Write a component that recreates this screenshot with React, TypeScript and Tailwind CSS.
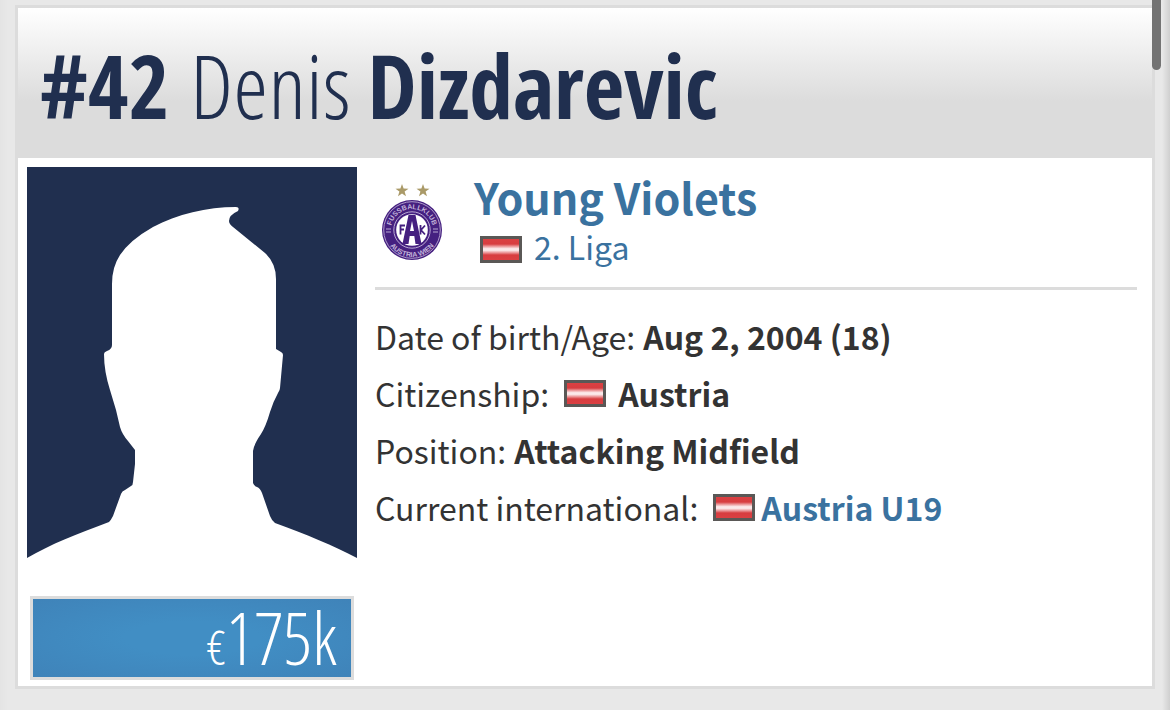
function AustrianFlag({ className = "" }: { className?: string }) {
  return (
    <span
      role="img"
      aria-label="Austria"
      className={`inline-block h-[27px] w-[42px] shrink-0 border-3 border-[#5a5856] bg-[linear-gradient(to_bottom,#db4042_0%,#d73d40_24%,#ea8f91_34%,#fbe9ea_46%,#fbe9ea_54%,#ea8f91_66%,#d73d40_76%,#db4042_100%)] ${className}`}
    />
  );
}

function Silhouette() {
  return (
    <svg viewBox="0 0 330 392" className="block w-full" role="img" aria-label="Denis Dizdarevic">
      <rect width="330" height="392" fill="#202f4f" />
      <path
        fill="#fff"
        d="M0 392V391C24 377 50 367 82 355Q84 353 86 349L94 327Q95 324 98 323L104 319Q106 318 106 315L108 297V283L101 274Q95 267 93 260L89 243L83 223Q77 204 77 187Q77 185 80 184Q85 182 85 178V117Q85 100 93 88Q103 73 126 60C150 47 180 40 209 40Q213 40 211 44Q202 48 202 54Q202 57 206 60L238 86Q249 96 249 112V182L254 185Q256 186 256 188L253 221Q253 223 251 226Q246 235 243 245Q239 259 234 267Q227 277 226 284V316Q227 319 230 320Q233 321 235 326L243 349Q245 354 248 356C279 367 307 379 330 391V392Z"
      />
    </svg>
  );
}

function ClubCrest() {
  return (
    <svg viewBox="0 0 62 78" className="h-[78px] w-[62px] shrink-0" role="img" aria-label="Young Violets crest">
      <defs>
        <path id="crest-top" d="M10 47A21 21 0 0 1 52 47" />
        <path id="crest-bottom" d="M4 47A27 27 0 0 0 58 47" />
      </defs>
      <g fill="#aa9a68">
        <path d="M21 1l1.600 4.600 4.900.1-3.900 2.900 1.400 4.700-4-2.800-4 2.800 1.400-4.700-3.900-2.900 4.900-.1z" />
        <path d="M42 1l1.600 4.600 4.900.1-3.900 2.900 1.400 4.700-4-2.800-4 2.800 1.400-4.700-3.900-2.900 4.900-.1z" />
      </g>
      <circle cx="31" cy="47" r="30" fill="#452080" />
      <circle cx="31" cy="47" r="28.300" fill="none" stroke="#b9a8d3" strokeWidth=".9" />
      <circle cx="31" cy="47" r="18.200" fill="none" stroke="#b9a8d3" strokeWidth="1" />
      <circle cx="31" cy="47" r="15.800" fill="#fff" />
      <g fill="#c3b4da" fontFamily="Liberation Sans, sans-serif" fontWeight="700" fontSize="7">
        <text textAnchor="middle">
          <textPath href="#crest-top" startOffset="50%">FUSSBALLKLUB</textPath>
        </text>
        <text textAnchor="middle">
          <textPath href="#crest-bottom" startOffset="50%">AUSTRIA WIEN</textPath>
        </text>
      </g>
      <path d="M5 46h5M5 49h5M52 46h5M52 49h5" stroke="#b9a8d3" strokeWidth="1" />
      <path
        fill="#452080"
        fillRule="evenodd"
        d="M27.500 32h7l6 29h-6l-1.200-8h-4.600l-1.200 8h-6zM31 38l-2 10h4z"
      />
      <path d="M19.500 51.500V42.500h4.500M19.500 46.500h3.500M39.500 42v9.500M44 42.500l-4 4.500 4 4.500" fill="none" stroke="#452080" strokeWidth="1.800" />
    </svg>
  );
}

export default function App() {
  return (
    <div className="relative min-h-screen bg-[linear-gradient(to_right,#e4e4e4_0,#e8e8e8_8px,#e8e8e8_calc(100%-8px),#cfcfcf_100%)] px-[15px] pt-[5px] pb-[21px] font-['Noto_Sans_CJK_SC',sans-serif] text-[32px] text-[#333]">
      <main className="border-3 border-[#dcdcdc] bg-white">
        <header className="flex h-[150px] items-center bg-[linear-gradient(to_bottom,#fff_0%,#dcdcdc_62%)] px-[22px] pt-0.5">
          <h1 className="font-['Open_Sans_Condensed_Light','Noto_Sans_CJK_SC',sans-serif] text-[89px] leading-none font-light whitespace-pre text-[#202f4f]">
            <span className="mr-1 font-['Open_Sans_Condensed',sans-serif] text-[88px] font-bold">#42</span> Denis{" "}
            <strong className="font-['Open_Sans_Condensed',sans-serif] text-[88px] font-bold">Dizdarevic</strong>
          </h1>
        </header>

        <div className="flex pt-[9px] pr-[15px] pb-1.5 pl-[9px]">
          <aside className="flex w-[330px] shrink-0 flex-col gap-[37px]">
            <Silhouette />
            <a
              href="#market-value"
              className="mx-[3px] flex h-[84px] items-baseline justify-end border-3 border-[#dcdcdc] bg-[radial-gradient(ellipse_at_center,#418ec4_30%,#3f83b9_100%)] pr-3.5 font-['Open_Sans_Condensed_Light','Open_Sans_Condensed','Noto_Sans_CJK_SC',sans-serif] text-[72px] leading-[76px] font-light text-white"
            >
              <span className="text-[48px]">€</span>175k
            </a>
          </aside>

          <section className="ml-[18px] min-w-0 flex-1">
            <div className="flex h-[123px] border-b-3 border-[#dcdcdc] pt-4 pl-1.5 text-[#3a729f]">
              <ClubCrest />
              <div className="-mt-2 ml-[31px]">
                <h2 className="text-[43px] leading-[42px] font-bold">
                  <a href="#club">Young Violets</a>
                </h2>
                <a href="#league" className="ml-1.5 flex items-center gap-3 leading-[58px]">
                  <AustrianFlag className="mt-1.5" />
                  2. Liga
                </a>
              </div>
            </div>

            <ul className="mt-[18px] leading-[57px]">
              <li className="flex items-center gap-2">
                <span>Date of birth/Age:</span>
                <strong>Aug 2, 2004 (18)</strong>
              </li>
              <li className="flex items-center gap-3">
                <span>Citizenship:</span>
                <AustrianFlag className="ml-[3px]" />
                <strong>Austria</strong>
              </li>
              <li className="flex items-center gap-2">
                <span>Position:</span>
                <strong>Attacking Midfield</strong>
              </li>
              <li className="flex items-center">
                <span>Current international:</span>
                <AustrianFlag className="mr-1.5 ml-[15px]" />
                <a href="#austria-u19" className="font-bold text-[#3a729f]">
                  Austria U19
                </a>
              </li>
            </ul>
          </section>
        </div>
      </main>
      <div aria-hidden="true" className="absolute top-0 right-[9px] h-[70px] w-[9px] rounded-b-full bg-[#737373]" />
    </div>
  );
}
